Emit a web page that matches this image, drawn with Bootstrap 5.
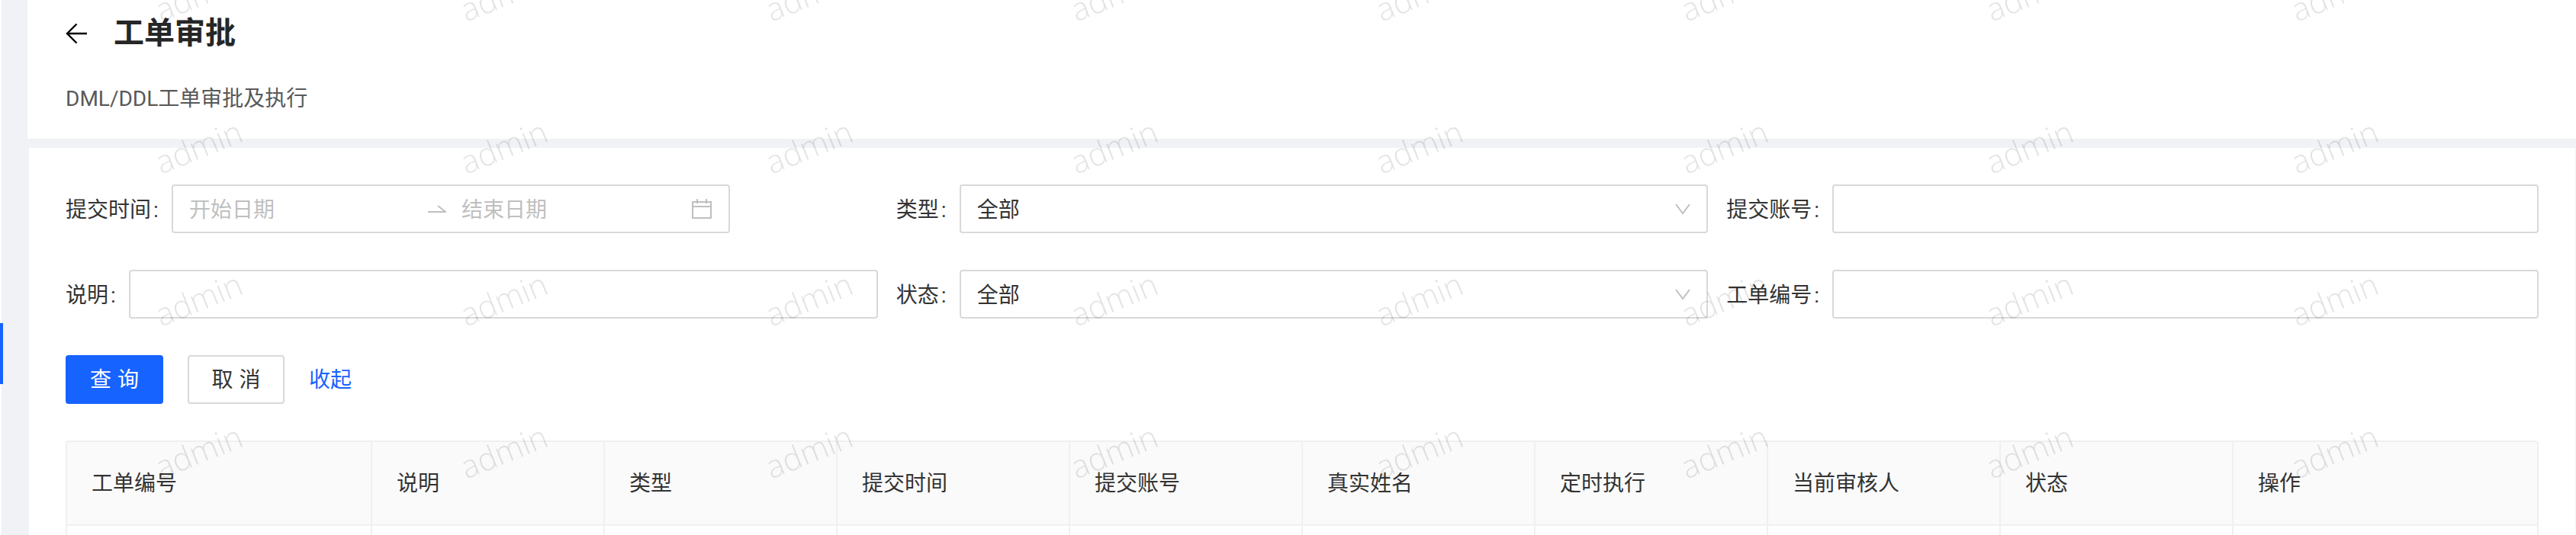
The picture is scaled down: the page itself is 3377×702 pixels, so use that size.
<!DOCTYPE html>
<html lang="zh-CN">
<head>
  <meta charset="UTF-8" />
  <meta name="viewport" content="width=device-width, initial-scale=1" />
  <title>工单审批</title>
  <link href="https://cdn.jsdelivr.net/npm/bootstrap@5.3.2/dist/css/bootstrap.min.css" rel="stylesheet" />
  <style>
    html, body { height: 100%; overflow: hidden; }
    body {
      background: #f0f2f5;
      color: #333;
      font-family: Roboto, "Noto Sans CJK SC", sans-serif;
      font-size: 28px;
      line-height: 44px;
    }
    .side-rail { width: 36px; box-shadow: inset 2px 0 0 #fff; }
    .rail-marker { width: 4px; height: 80px; margin-top: 424px; background: #1763ff; }
    .page-head { height: 182px; padding-left: 50px; margin-bottom: 12px; background: #fff; }
    .head-title { height: 88px; gap: 35px; }
    .head-title h1 { margin: 0; font-size: 40px; line-height: 56px; font-weight: 700; color: #262626; }
    .head-note { margin-top: 20px; color: #595959; }
    .page-body { margin-left: 2px; margin-right: 1px; padding: 48px 48px 0; background: #fff; }
    .filter-row { --bs-gutter-x: 24px; --bs-gutter-y: 48px; }
    .filter-label { flex: none; padding-top: 3px; white-space: nowrap; }
    .filter-label::after { content: ":"; display: inline-block; width: 27px; padding-left: 3px; }
    .form-control.filter-input, .form-select.filter-input {
      height: 64px;
      padding: 3px 21px 0;
      border: 2px solid #d9d9d9;
      border-radius: 4px;
      font-size: 28px;
      color: #333;
      box-shadow: none;
    }
    .form-select.filter-input {
      padding-right: 60px;
      background-image: url("data:image/svg+xml,%3Csvg xmlns='http://www.w3.org/2000/svg' viewBox='0 0 20 14'%3E%3Cpath d='M1 1l9 12 9-12' fill='none' stroke='%23bfbfbf' stroke-width='2'/%3E%3C/svg%3E");
      background-position: right 21px center;
      background-size: 20px 14px;
    }
    .range-box { width: 732px; height: 64px; padding: 0 22px 0 21px; border: 2px solid #d9d9d9; border-radius: 4px; }
    .range-box input { width: 313px; padding: 3px 0 0; border: 0; outline: 0; background: none; color: #333; }
    .range-box input::placeholder { color: #bfbfbf; opacity: 1; }
    .range-arrow { flex: none; margin-right: 20px; }
    .range-box .range-end { width: 260px; }
    .query-btn, .cancel-btn {
      width: 128px;
      height: 64px;
      padding: 2px 0 0;
      border-radius: 4px;
      border-width: 2px;
      font-size: 28px;
      letter-spacing: 8px;
      text-indent: 8px;
    }
    .query-btn, .query-btn:hover { background: #1763ff; border-color: #1763ff; color: #fff; }
    .cancel-btn, .cancel-btn:hover { width: 127px; background: #fff; border-color: #d9d9d9; color: #333; }
    .fold-link { padding-top: 2px; color: #1763ff; text-decoration: none; }
    .btn-line { margin-top: 48px; margin-bottom: 48px; gap: 32px; }
    .table.order-table { width: 3242px; table-layout: fixed; border-collapse: separate; border-spacing: 0; margin: 0; font-size: 28px; line-height: 44px; }
    .table.order-table th, .table.order-table td {
      padding: 0 32px;
      border: 0;
      border-right: 2px solid #f0f0f0;
      box-shadow: none;
      color: #333;
      font-weight: 400;
    }
    .table.order-table th {
      height: 112px;
      padding-top: 2px;
      background: #fafafa;
      border-top: 2px solid #f0f0f0;
      border-bottom: 2px solid #f0f0f0;
      vertical-align: middle;
    }
    .table.order-table td { height: 12px; line-height: 0; }
    .table.order-table tr > :first-child { border-left: 2px solid #f0f0f0; }
    .table.order-table th:first-child { border-top-left-radius: 4px; }
    .table.order-table th:last-child { border-top-right-radius: 4px; }
    .col-first { width: 402px; }
    .col-mid { width: 305px; }
    .watermarks {
      position: fixed;
      inset: -108px 0 0 60px;
      display: grid;
      grid-template-columns: repeat(8, 400px);
      grid-auto-rows: 200px;
      place-items: center;
      overflow: hidden;
      pointer-events: none;
    }
    .watermarks span {
      font-family: "Open Sans", sans-serif;
      font-size: 42px;
      font-weight: 300;
      line-height: 1;
      color: rgba(0, 0, 0, .11);
      transform: rotate(-22deg);
    }
  </style>
</head>
<body>
  <div class="d-flex">
    <aside class="side-rail flex-shrink-0">
      <div class="rail-marker"></div>
    </aside>
    <main class="flex-grow-1">
      <header class="page-head">
        <div class="head-title d-flex align-items-center">
          <svg width="28" height="28" viewBox="0 0 28 28" fill="none" stroke="#000" stroke-width="2.4">
            <path d="M28 14H2M14.5 1.5L2 14l12.5 12.5" />
          </svg>
          <h1>工单审批</h1>
        </div>
        <div class="head-note">DML/DDL工单审批及执行</div>
      </header>

      <section class="page-body">
        <form>
          <div class="row filter-row">
            <div class="col-4 d-flex align-items-center">
              <label class="filter-label">提交时间</label>
              <div class="range-box d-flex align-items-center">
                <input type="text" placeholder="开始日期" />
                <svg class="range-arrow" width="24" height="10" viewBox="0 0 24 10" fill="none" stroke="#bfbfbf" stroke-width="2">
                  <path d="M0 9h23L13 1" />
                </svg>
                <input class="range-end" type="text" placeholder="结束日期" />
                <svg class="flex-shrink-0 ms-auto" width="26" height="26" viewBox="0 0 26 26" fill="none" stroke="#bfbfbf" stroke-width="2">
                  <path d="M1 4h24v21H1zM1 10h24M7 0v6M19 0v6" />
                </svg>
              </div>
            </div>
            <div class="col-4 d-flex align-items-center">
              <label class="filter-label">类型</label>
              <select class="form-select filter-input"><option>全部</option></select>
            </div>
            <div class="col-4 d-flex align-items-center">
              <label class="filter-label">提交账号</label>
              <input class="form-control filter-input" type="text" />
            </div>
            <div class="col-4 d-flex align-items-center">
              <label class="filter-label">说明</label>
              <input class="form-control filter-input" type="text" />
            </div>
            <div class="col-4 d-flex align-items-center">
              <label class="filter-label">状态</label>
              <select class="form-select filter-input"><option>全部</option></select>
            </div>
            <div class="col-4 d-flex align-items-center">
              <label class="filter-label">工单编号</label>
              <input class="form-control filter-input" type="text" />
            </div>
          </div>
          <div class="btn-line d-flex align-items-center">
            <button type="button" class="btn query-btn">查询</button>
            <button type="button" class="btn cancel-btn">取消</button>
            <a href="#" class="fold-link">收起</a>
          </div>
        </form>

        <table class="table order-table">
          <colgroup>
            <col class="col-first" />
            <col class="col-mid" /><col class="col-mid" /><col class="col-mid" /><col class="col-mid" />
            <col class="col-mid" /><col class="col-mid" /><col class="col-mid" /><col class="col-mid" />
            <col />
          </colgroup>
          <thead>
            <tr>
              <th>工单编号</th>
              <th>说明</th>
              <th>类型</th>
              <th>提交时间</th>
              <th>提交账号</th>
              <th>真实姓名</th>
              <th>定时执行</th>
              <th>当前审核人</th>
              <th>状态</th>
              <th>操作</th>
            </tr>
          </thead>
          <tbody>
            <tr><td></td><td></td><td></td><td></td><td></td><td></td><td></td><td></td><td></td><td></td></tr>
          </tbody>
        </table>
      </section>
    </main>
  </div>

  <div class="watermarks" id="watermarks"></div>

  <script src="https://cdn.jsdelivr.net/npm/bootstrap@5.3.2/dist/js/bootstrap.bundle.min.js"></script>
  <script>
    // watermark repeats over the whole page
    const capa = document.getElementById("watermarks");
    for (let i = 0; i < 32; i++) {
      const marca = document.createElement("span");
      marca.textContent = "admin";
      capa.appendChild(marca);
    }
  </script>
</body>
</html>
